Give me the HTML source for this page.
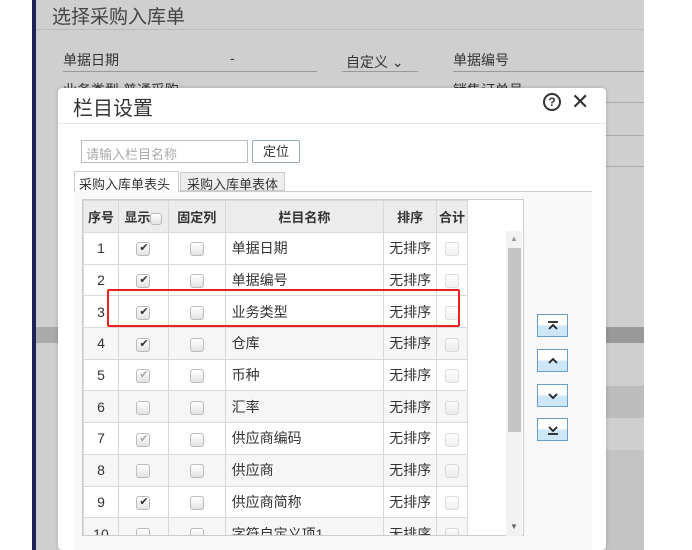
<!DOCTYPE html>
<html><head><meta charset="utf-8"><style>
*{margin:0;padding:0;box-sizing:border-box}
body{width:692px;height:550px;overflow:hidden;background:#fff;position:relative;font-family:"Liberation Sans","Noto Sans CJK SC",sans-serif;color:#333}
.a{position:absolute}
.bg{left:36px;top:0;width:608px;height:550px;background:#cfcfcf}
.nav{left:32px;top:0;width:4px;height:550px;background:#1a2456}
.dlg{left:58px;top:88px;width:548px;height:462px;background:#fff;border-radius:4px;box-shadow:0 0 4px rgba(0,0,0,.2)}
table{border-collapse:collapse;font-size:14px}
td,th{border:1px solid #d8d8d8;height:31.7px;text-align:center;padding:0}
th{background:#ececec;font-weight:bold;color:#333;height:32px;font-size:13px}
td.n{text-align:left;padding-left:6px}
tr.g td{background:#f6f6f6}
.cb{display:inline-block;width:14px;height:14px;border:1px solid #bbb;border-radius:3px;background:linear-gradient(#fff,#e2e2e2);vertical-align:middle;position:relative}
.cb.c::after{content:"✔";position:absolute;left:2px;top:-2px;font-size:11px;color:#333}
.cb.l::after{content:"✔";position:absolute;left:2px;top:-2px;font-size:11px;color:#aaa}
.cb.f{opacity:.5}
.btn{left:537px;width:31px;height:23px;border:1px solid #6a9ccc;background:linear-gradient(#fff 0,#fff 45%,#cde6f8 55%,#cde6f8)}
.btn svg{position:absolute;left:9px;top:5px}
</style></head><body>
<div class="a bg"></div>
<div class="a nav"></div>
<div class="a" style="left:52px;top:2px;font-size:19px;color:#444">选择采购入库单</div>
<div class="a" style="left:36px;top:29px;width:608px;height:1px;background:#bbb"></div>
<div class="a" style="left:63px;top:50px;font-size:14px;color:#333">单据日期</div>
<div class="a" style="left:230px;top:50px;font-size:14px">-</div>
<div class="a" style="left:346px;top:52px;font-size:14px">自定义 ⌄</div>
<div class="a" style="left:453px;top:50px;font-size:14px">单据编号</div>
<div class="a" style="left:63px;top:71px;width:254px;height:1px;background:#999"></div>
<div class="a" style="left:342px;top:71px;width:76px;height:1px;background:#999"></div>
<div class="a" style="left:453px;top:71px;width:191px;height:1px;background:#999"></div>
<div class="a" style="left:63px;top:80px;font-size:14px">业务类型 普通采购</div>
<div class="a" style="left:453px;top:80px;font-size:14px">销售订单号</div>
<div class="a" style="left:606px;top:102px;width:38px;height:1px;background:#aaa"></div>
<div class="a" style="left:606px;top:135px;width:38px;height:1px;background:#aaa"></div>
<div class="a" style="left:606px;top:166px;width:38px;height:1px;background:#aaa"></div>
<div class="a" style="left:36px;top:327px;width:22px;height:16px;background:#aaa"></div>
<div class="a" style="left:606px;top:327px;width:38px;height:16px;background:#999"></div>
<div class="a" style="left:606px;top:386px;width:38px;height:32px;background:#bcbcbc"></div>
<div class="a" style="left:606px;top:450px;width:38px;height:100px;background:#c4c4c4"></div>
<div class="a dlg"></div>
<div class="a" style="left:73px;top:92px;font-size:20px;color:#333">栏目设置</div>
<div class="a" style="left:543px;top:93px;color:#333;width:18px;height:18px;border:2px solid #333;border-radius:50%;text-align:center;line-height:14px;font-size:12px;font-weight:bold">?</div>
<div class="a" style="left:571px;top:89px;font-size:22px;color:#333">✕</div>
<div class="a" style="left:58px;top:123px;width:548px;height:1px;background:#e6e6e6"></div>
<div class="a" style="left:81px;top:140px;width:167px;height:23px;border:1px solid #bbb;font-size:13px;color:#aaa;padding:3px 4px">请输入栏目名称</div>
<div class="a" style="left:252px;top:140px;width:48px;height:23px;border:1px solid #9ab;border-radius:2px;font-size:13px;text-align:center;line-height:21px">定位</div>
<div class="a" style="left:74px;top:191px;width:518px;height:1px;background:#ccc"></div>
<div class="a" style="left:74px;top:171px;width:105px;height:21px;border:1px solid #ccc;border-bottom:none;background:#fff;font-size:13px;padding:2px 4px">采购入库单表头</div>
<div class="a" style="left:180px;top:172px;width:105px;height:19px;border:1px solid #ccc;background:#eee;font-size:13px;padding:1px 6px">采购入库单表体</div>
<div class="a" style="left:74px;top:192px;width:518px;height:358px;background:#f8f8f8"></div>
<div class="a" style="left:82px;top:199px;width:442px;height:337px;background:#fff;border:1px solid #ccc;overflow:hidden">
<table style="width:385px">
<tr><th style="width:35px">序号</th><th style="width:50px">显示<span class="cb" style="width:12px;height:12px"></span></th><th style="width:57px">固定列</th><th style="width:159px">栏目名称</th><th style="width:53px">排序</th><th style="width:31px">合计</th></tr>
<tr><td>1</td><td><span class="cb c"></span></td><td><span class="cb"></span></td><td class="n">单据日期</td><td>无排序</td><td><span class="cb f"></span></td></tr>
<tr><td>2</td><td><span class="cb c"></span></td><td><span class="cb"></span></td><td class="n">单据编号</td><td>无排序</td><td><span class="cb f"></span></td></tr>
<tr><td>3</td><td><span class="cb c"></span></td><td><span class="cb"></span></td><td class="n">业务类型</td><td>无排序</td><td><span class="cb f"></span></td></tr>
<tr class="g"><td>4</td><td><span class="cb c"></span></td><td><span class="cb"></span></td><td class="n">仓库</td><td>无排序</td><td><span class="cb f"></span></td></tr>
<tr><td>5</td><td><span class="cb l"></span></td><td><span class="cb"></span></td><td class="n">币种</td><td>无排序</td><td><span class="cb f"></span></td></tr>
<tr class="g"><td>6</td><td><span class="cb"></span></td><td><span class="cb"></span></td><td class="n">汇率</td><td>无排序</td><td><span class="cb f"></span></td></tr>
<tr><td>7</td><td><span class="cb l"></span></td><td><span class="cb"></span></td><td class="n">供应商编码</td><td>无排序</td><td><span class="cb f"></span></td></tr>
<tr class="g"><td>8</td><td><span class="cb"></span></td><td><span class="cb"></span></td><td class="n">供应商</td><td>无排序</td><td><span class="cb f"></span></td></tr>
<tr><td>9</td><td><span class="cb c"></span></td><td><span class="cb"></span></td><td class="n">供应商简称</td><td>无排序</td><td><span class="cb f"></span></td></tr>
<tr class="g"><td>10</td><td><span class="cb"></span></td><td><span class="cb"></span></td><td class="n">字符自定义项1</td><td>无排序</td><td><span class="cb f"></span></td></tr>
</table>
</div>
<div class="a" style="left:506px;top:231px;width:16px;height:305px;background:#f2f2f2"></div>
<div class="a" style="left:510px;top:234px;font-size:8px;color:#999">▲</div>
<div class="a" style="left:508px;top:248px;width:13px;height:184px;background:#c4c4c4"></div>
<div class="a" style="left:510px;top:522px;font-size:8px;color:#666">▼</div>
<div class="a" style="left:107px;top:289px;width:353px;height:38px;border:2px solid #f02020;border-radius:2px"></div>
<div class="a btn" style="top:314px"><svg width="12" height="12" viewBox="0 0 12 12" fill="none" stroke="#222" stroke-width="1.8"><path d="M1 2H11M2 9L6 5L10 9"/></svg></div>
<div class="a btn" style="top:349px"><svg width="12" height="12" viewBox="0 0 12 12" fill="none" stroke="#222" stroke-width="1.8"><path d="M2 8L6 4L10 8"/></svg></div>
<div class="a btn" style="top:384px"><svg width="12" height="12" viewBox="0 0 12 12" fill="none" stroke="#222" stroke-width="1.8"><path d="M2 4L6 8L10 4"/></svg></div>
<div class="a btn" style="top:418px"><svg width="12" height="12" viewBox="0 0 12 12" fill="none" stroke="#222" stroke-width="1.8"><path d="M2 3L6 7L10 3M1 10H11"/></svg></div>
</body></html>
